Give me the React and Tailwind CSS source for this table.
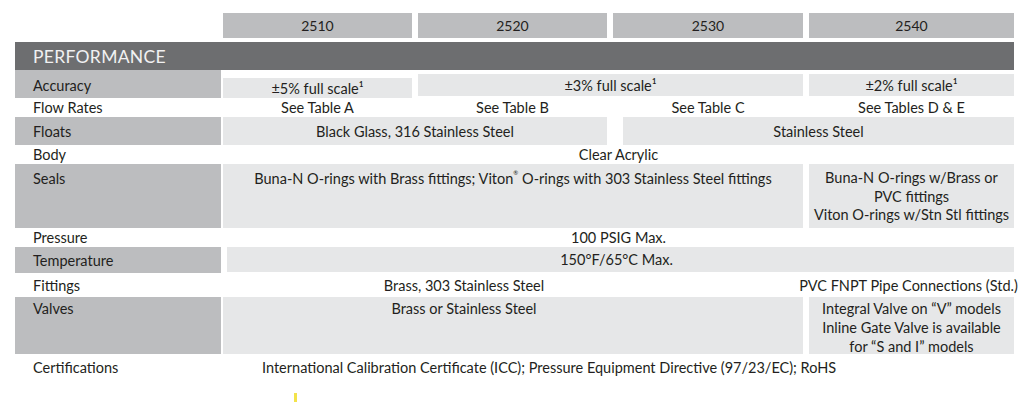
import React from "react";

const font = { fontFamily: "Lato, 'Open Sans', sans-serif" };

function Label({ children, shaded, className = "" }) {
  return (
    <div
      className={`w-[206px] shrink-0 pl-[18px] ${shaded ? "bg-[#bcbdbf]" : ""} ${className}`}
    >
      {children}
    </div>
  );
}

export default function App() {
  return (
    <div
      className="w-[1030px] h-[405px] bg-white text-[14.5px] text-[#231f20] leading-[19px] pl-[15px] pt-[13px]"
      style={font}
    >
      {/* model header */}
      <div className="flex h-[25px] ml-[208px] gap-[6px] text-[14px]">
        <div className="w-[189px] bg-[#bcbdbf] flex items-center justify-center">2510</div>
        <div className="w-[189px] bg-[#bcbdbf] flex items-center justify-center">2520</div>
        <div className="w-[190px] bg-[#bcbdbf] flex items-center justify-center">2530</div>
        <div className="w-[205px] bg-[#bcbdbf] flex items-center justify-center">2540</div>
      </div>

      {/* section bar */}
      <div className="mt-[4px] h-[28px] w-[999px] bg-[#6d6e70] text-[#f1f1f2] text-[17.5px] pl-[18px] flex items-center tracking-[0.3px]">
        PERFORMANCE
      </div>

      {/* Accuracy */}
      <div className="flex h-[28px]">
        <Label shaded className="flex items-center pt-[2px]">Accuracy</Label>
        <div className="ml-[2px] flex gap-[6px]">
          <div className="w-[189px] mt-[8px] h-[20px] bg-[#e6e7e8] flex items-center justify-center">
            ±5% full scale¹
          </div>
          <div className="w-[385px] mt-[4px] h-[22px] bg-[#e6e7e8] flex items-center justify-center">
            ±3% full scale¹
          </div>
          <div className="w-[205px] mt-[4px] h-[22px] bg-[#e6e7e8] flex items-center justify-center">
            ±2% full scale¹
          </div>
        </div>
      </div>

      {/* Flow Rates */}
      <div className="flex h-[19px] items-center">
        <Label>Flow Rates</Label>
        <div className="ml-[2px] flex gap-[6px]">
          <div className="w-[189px] text-center">See Table A</div>
          <div className="w-[189px] text-center">See Table B</div>
          <div className="w-[190px] text-center">See Table C</div>
          <div className="w-[205px] text-center">See Tables D &amp; E</div>
        </div>
      </div>

      {/* Floats */}
      <div className="flex h-[28px]">
        <Label shaded className="flex items-center">Floats</Label>
        <div className="ml-[2px] flex gap-[16px]">
          <div className="w-[384px] bg-[#e6e7e8] flex items-center justify-center">
            Black Glass, 316 Stainless Steel
          </div>
          <div className="w-[391px] bg-[#e6e7e8] flex items-center justify-center">
            Stainless Steel
          </div>
        </div>
      </div>

      {/* Body */}
      <div className="flex h-[19px] items-center">
        <Label>Body</Label>
        <div className="ml-[2px] w-[791px] text-center">Clear Acrylic</div>
      </div>

      {/* Seals */}
      <div className="flex h-[64px]">
        <Label shaded className="pt-[5px]">Seals</Label>
        <div className="ml-[2px] flex gap-[6px]">
          <div className="w-[580px] bg-[#e6e7e8] text-center pt-[5px]">
            Buna-N O-rings with Brass fittings; Viton
            <sup className="text-[6px] align-[6px]">®</sup> O-rings with 303 Stainless Steel fittings
          </div>
          <div className="w-[205px] bg-[#e6e7e8] text-center pt-[5px] leading-[18.5px] whitespace-nowrap">
            Buna-N O-rings w/Brass or
            <br />
            PVC fittings
            <br />
            Viton O-rings w/Stn Stl fittings
          </div>
        </div>
      </div>

      {/* Pressure */}
      <div className="flex h-[19px] items-center">
        <Label>Pressure</Label>
        <div className="ml-[2px] w-[791px] text-center">100 PSIG Max.</div>
      </div>

      {/* Temperature */}
      <div className="flex h-[26px]">
        <Label shaded className="flex items-center">Temperature</Label>
        <div className="ml-[6px] w-[787px] h-[25px] bg-[#e6e7e8] flex items-center justify-center pr-[8px]">
          150°F/65°C Max.
        </div>
      </div>

      {/* Fittings */}
      <div className="flex h-[24px] items-center">
        <Label>Fittings</Label>
        <div className="ml-[2px] flex gap-[6px]">
          <div className="w-[580px] text-center pr-[98px]">Brass, 303 Stainless Steel</div>
          <div className="w-[205px] flex justify-center whitespace-nowrap pr-[6px]">
            <span>PVC FNPT Pipe Connections (Std.)</span>
          </div>
        </div>
      </div>

      {/* Valves */}
      <div className="flex h-[57px]">
        <Label shaded className="pt-[2px]">Valves</Label>
        <div className="ml-[2px] flex gap-[6px]">
          <div className="w-[580px] bg-[#e6e7e8] text-center pr-[98px] pt-[2px]">
            Brass or Stainless Steel
          </div>
          <div className="w-[205px] bg-[#e6e7e8] text-center pt-[2px] whitespace-nowrap">
            Integral Valve on “V” models
            <br />
            Inline Gate Valve is available
            <br />
            for “S and I” models
          </div>
        </div>
      </div>

      {/* Certifications */}
      <div className="flex h-[26px] items-center">
        <Label>Certifications</Label>
        <div className="ml-[2px] pl-[39px]">
          International Calibration Certificate (ICC); Pressure Equipment Directive (97/23/EC); RoHS
        </div>
      </div>

      <div className="ml-[279px] mt-[13px] w-[3px] h-[9px] bg-[#f3e34a]" />
    </div>
  );
}
